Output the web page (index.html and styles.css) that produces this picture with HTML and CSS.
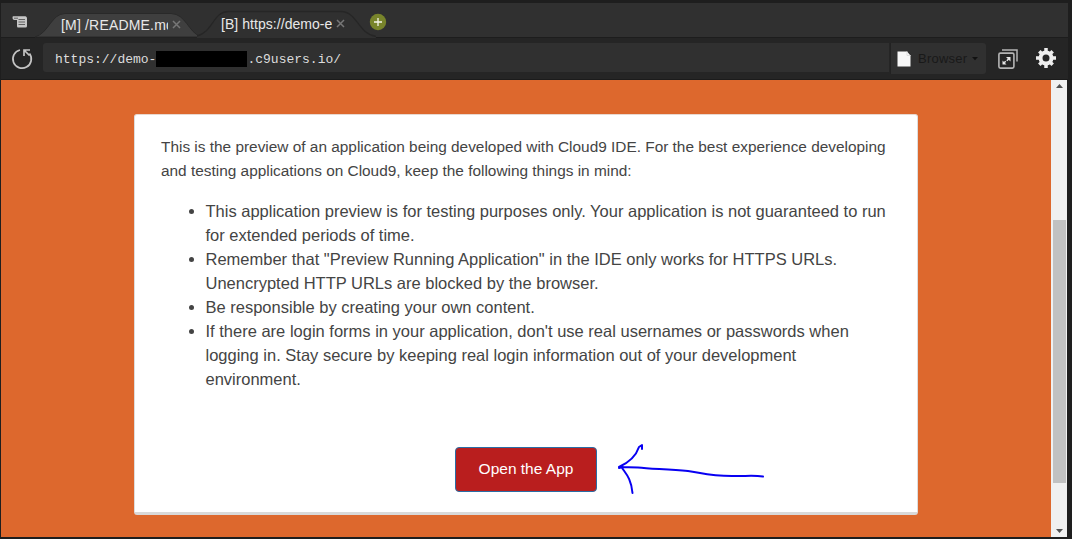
FILE: index.html
```html
<!DOCTYPE html>
<html lang="en">
<head>
<meta charset="utf-8">
<title>Application preview</title>
<link rel="stylesheet" href="styles.css">
</head>
<body>
<div class="ide">
  <header class="tabs">
    <svg class="tab-menu" width="16" height="14" viewBox="0 0 16 14"><path d="M1 1.200h12.500q1.500.3 1.500 2V11q0 1.500-1.500 1.500H6Q5 12.500 5 11V5H2.500Q.5 5 .5 3 .5 1.200 1 1.200Z" fill="#c6c6c6"/><path d="M6.500 4.500h6.500M6.500 7h6.500M6.500 9.500h6.500M2 3.200h4" stroke="#555" stroke-width=".9"/></svg>
    <div class="tab tab-first">
      <svg class="tab-shape" width="168" height="26" viewBox="0 0 168 26"><path d="M0 25C14 21 16 2 30 1.500H136C151 2 153 20 166 25Z" fill="#3f3f3f" stroke="#292929"/></svg>
      <span class="tab-label label-first">[M] /README.md</span>
      <svg class="close" width="9" height="9" viewBox="0 0 9 9"><path d="M1 1l7 7M8 1L1 8" stroke="#777" stroke-width="1.500"/></svg>
    </div>
    <div class="tab tab-active">
      <svg class="tab-shape" width="182" height="28" viewBox="0 0 182 28"><path d="M0 26C16 22 16 2 31 1.500H144C161 2 160 23 179 26.500V28H0Z" fill="#303030"/><path d="M0 26C16 22 16 2 31 1.500H144C161 2 160 23 179 26.500" fill="none" stroke="#262626" stroke-width="1.300"/></svg>
      <span class="tab-label label-active">[B] https://demo-e</span>
      <svg class="close" width="9" height="9" viewBox="0 0 9 9"><path d="M1 1l7 7M8 1L1 8" stroke="#777" stroke-width="1.500"/></svg>
    </div>
    <svg class="add" width="18" height="18" viewBox="0 0 18 18"><circle cx="9" cy="9" r="8.200" fill="#78842b"/><path d="M9 5v8M5 9h8" stroke="#f4f4ea" stroke-width="1.300"/></svg>
  </header>
  <div class="toolbar">
    <svg class="reload" width="22" height="22" viewBox="0 0 22 22"><path d="M9 2A9.200 9.200 0 1 0 18.500 5.500" fill="none" stroke="#c4c4c4" stroke-width="1.700"/><path d="M13 8V2h6M13.500 2.500l5 5" fill="none" stroke="#c4c4c4" stroke-width="1.700"/></svg>
    <div class="address"><span>https://demo-</span><span class="redacted"></span><span>.c9users.io/</span></div>
    <div class="browser">
      <svg width="14" height="16" viewBox="0 0 14 16"><path d="M.5.500h9.500l3.500 4V15.500H.5Z" fill="#f7f7f7"/><path d="M10 .5v4h3.500" fill="none" stroke="#ddd"/></svg>
      <span class="browser-name">Browser</span>
      <svg width="6" height="4" viewBox="0 0 6 4"><path d="M0 0h6L3 3.200Z" fill="#111"/></svg>
    </div>
    <svg class="popout" width="20" height="20" viewBox="0 0 20 20"><rect x=".9" y="4.100" width="15" height="15" rx="1.500" fill="none" stroke="#b4b4b4" stroke-width="1.600"/><path d="M4 1h15v11.500" fill="none" stroke="#b4b4b4" stroke-width="1.500"/><path d="M8 8H12.500V12.500ZM4.500 11.500V15.500H8.500Z" fill="#e6e6e6"/><path d="M10.800 9.700l-2 2M6.200 13.800l1.500-1.500" stroke="#e6e6e6" stroke-width="1.500"/></svg>
    <svg class="gear" width="20" height="20" viewBox="-10 -10 20 20"><circle r="5.500" fill="none" stroke="#eee" stroke-width="4"/><g stroke="#eee" stroke-width="3.500"><path d="M0-6v-4M0 6v4M-6 0h-4M6 0h4M4.200-4.200l2.500-2.500M-4.200-4.200l-2.500-2.500M4.200 4.200l2.500 2.500M-4.200 4.200l-2.500 2.500"/></g></svg>
  </div>
  <div class="viewport">
    <main class="page">
      <section class="card">
        <p class="intro">This is the preview of an application being developed with Cloud9 IDE. For the best experience developing<br>and testing applications on Cloud9, keep the following things in mind:</p>
        <ul class="notes">
          <li>This application preview is for testing purposes only. Your application is not guaranteed to run<br>for extended periods of time.</li>
          <li>Remember that "Preview Running Application" in the IDE only works for HTTPS URLs.<br>Unencrypted HTTP URLs are blocked by the browser.</li>
          <li>Be responsible by creating your own content.</li>
          <li>If there are login forms in your application, don't use real usernames or passwords when<br>logging in. Stay secure by keeping real login information out of your development<br>environment.</li>
        </ul>
        <button class="open">Open the App</button>
        <svg class="arrow" width="148" height="54" viewBox="617 442 148 54"><path d="M763 476.500C752 475 744 476.500 732 476C710 476 702 473 688 471C668 469 650 469 638 467.500L619 467C630 462 636 456 639 447L642 445L642 449M619 468L623 467M621.500 467C625 473 631 477 632.500 493" fill="none" stroke="#0800f2" stroke-width="2" stroke-linecap="round" stroke-linejoin="round"/></svg>
      </section>
    </main>
    <div class="scrollbar">
      <svg width="7" height="4" viewBox="0 0 7 4"><path d="M0 4L3.500 0 7 4Z" fill="#505050"/></svg>
      <div class="track"><div class="thumb"></div></div>
      <svg width="7" height="4" viewBox="0 0 7 4"><path d="M0 0L3.500 4 7 0Z" fill="#505050"/></svg>
    </div>
  </div>
</div>
</body>
</html>
```
FILE: styles.css
```css
* { box-sizing: border-box; }
body { margin: 0; font-family: "Liberation Sans", Arial, sans-serif; }
svg { display: block; flex: none; }
.ide { width: 1072px; height: 539px; padding: 3px 4px 2px 1px; background: #1e1e1e; overflow: hidden; }
.tabs { display: flex; height: 35px; background: #303030; border-bottom: 1px solid #1d1d1d; }
.tab-menu { margin: 12px 0 0 11px; }
.tab { position: relative; display: flex; flex: none; }
.tab-shape { position: absolute; left: 0; top: 0; }
.tab-first { width: 161px; height: 26px; margin: 9px 0 0 7px; padding: 4px 0 0 26px; }
.tab-active { width: 182px; height: 28px; margin: 7px 0 0 1px; padding: 5px 0 0 24px; }
.tab-label { position: relative; overflow: hidden; white-space: nowrap; color: #e8e8e8; font-size: 14px; line-height: 18px; }
.label-first { width: 107px; letter-spacing: .18px; }
.label-active { width: 111px; letter-spacing: .05px; }
.close { position: relative; margin: 4px 0 0 4px; }
.add { margin: 10px 0 0 -10px; position: relative; }
.toolbar { display: flex; height: 42px; background: #252525; border-bottom: 1px solid #1b1b1b; }
.reload { margin: 10px 0 0 10px; }
.address { display: flex; align-items: center; width: 846px; height: 29px; margin: 5px 0 0 10px; padding: 3px 0 0 12px; background: #303030; border-radius: 3px 0 0 3px; color: #ddd; font: 13px "Liberation Mono", monospace; white-space: pre; }
.redacted { width: 91px; height: 16px; background: #000; }
.browser { display: flex; align-items: center; width: 96px; height: 31px; margin: 5px 0 0 1px; padding-left: 6px; background: #303030; border-radius: 0 3px 3px 0; border-left: 1px solid #222; }
.browser-name { width: 50px; margin: 0 4px 0 7px; color: #191919; font-size: 13px; letter-spacing: .25px; }
.popout { margin: 11px 0 0 12px; }
.gear { margin: 10px 0 0 18px; }
.viewport { display: flex; height: 457px; }
.page { width: 1050px; padding: 34px 0 0 133px; background: #dd682d; }
.card { position: relative; width: 784px; height: 401px; padding: 20px 26px; background: #fff; border: 1px solid #ddd; border-top-color: #e8d8cf; border-bottom: 3px solid #d9d9d9; border-radius: 3px; color: #444; }
.intro { margin: 0 -10px 16px 0; font-size: 15.400px; line-height: 24px; white-space: nowrap; }
.notes { margin: 0 -10px 56px 0; padding-left: 44.500px; font-size: 16.500px; line-height: 24px; white-space: nowrap; }
.open { display: block; width: 142px; height: 45px; margin: 0 0 0 294px; padding: 0 0 2px; background: #b91e1e; border: 1px solid #2a6da5; border-radius: 4px; color: #fff; font: 15.500px "Liberation Sans", Arial, sans-serif; }
.arrow { position: absolute; left: 482px; top: 327px; }
.scrollbar { display: flex; flex-direction: column; align-items: center; width: 16px; padding: 4px 0; background: #f0f0f0; }
.track { width: 13px; flex: 1; padding-top: 132px; }
.thumb { height: 263px; background: #c1c1c1; }
```
